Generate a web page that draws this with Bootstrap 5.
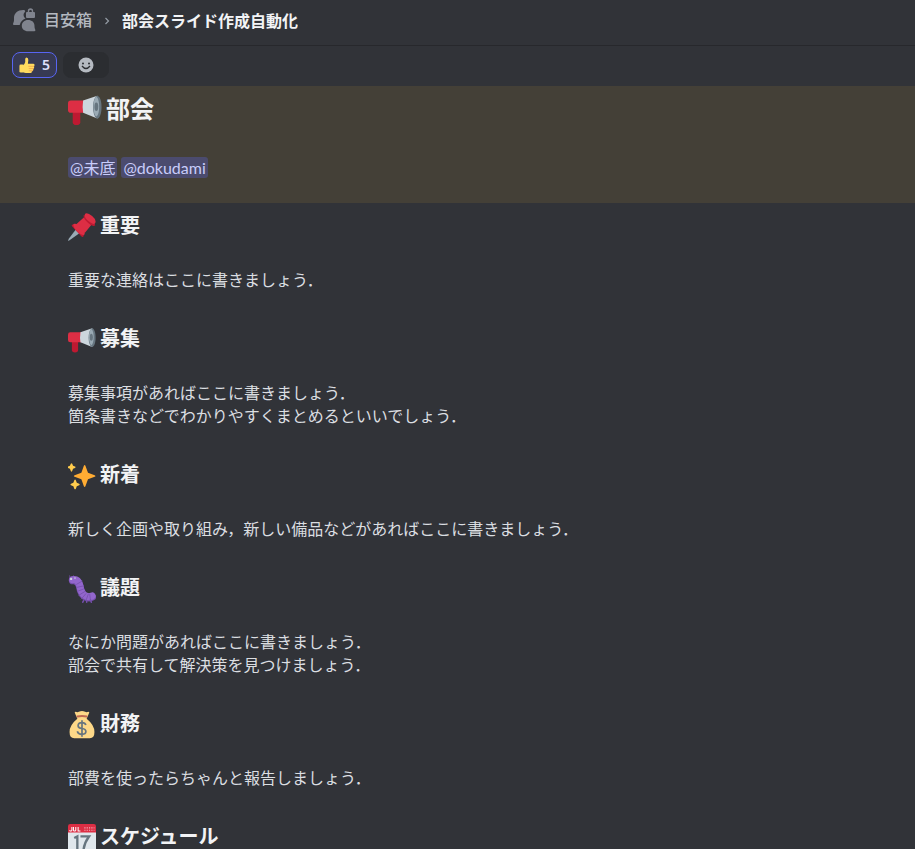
<!DOCTYPE html>
<html lang="ja">
<head>
<meta charset="utf-8">
<meta name="viewport" content="width=device-width, initial-scale=1">
<title>部会スライド作成自動化</title>
<link href="https://cdn.jsdelivr.net/npm/bootstrap@5.3.0/dist/css/bootstrap.min.css" rel="stylesheet">
<style>
body{background:#313338;color:#dbdee1;font:400 16px/23px "Noto Sans","Noto Sans CJK JP",sans-serif}
svg{display:block;flex:none}
.topbar{height:46px;padding:0 12px 6px;border-bottom:1px solid #27282c;font-family:"Noto Sans CJK JP",sans-serif}
.topbar a{color:#b5bac1;font-weight:500}
.topbar h1{font-size:16px;line-height:24px;font-weight:700;color:#f2f3f5}
.topbar .crumb-sep{margin:3px 12px 0}
.reactions{height:40px;padding:6px 12px 8px;gap:6px}
.reaction{height:26px;width:45px;border-radius:8px;border:1px solid #5865f2;background:#373a53;color:#dee0fc;font-weight:600;font-size:14px;line-height:20px;padding:0 6px}
.reaction-add{width:46px;border-color:#2b2d31;background:#2b2d31}
.message{padding:0 48px 0 68px}
.message svg{margin:2px 0 -2px}
.mentioned{background:#444037;padding-top:5px;padding-bottom:25px}
.mentioned h2{font-size:24px;line-height:34px;font-weight:700;color:#f2f3f5;gap:4px;margin-bottom:31px}
.mention{background:#4b4b6e;color:#c9cdfb;border-radius:3px;padding:0 2px;line-height:21px;font-family:Lato,"Noto Sans CJK JP",sans-serif}
.mention-list{gap:4px;height:22px}
.sections{padding-top:8px}
.sections h3{font-size:20px;line-height:28px;font-weight:700;color:#f2f3f5;gap:4px;margin-bottom:29px}
.sections p{margin-bottom:33px;font-family:"Noto Sans CJK JP",sans-serif}
h1,h2,h3{font-family:"Noto Sans CJK JP",sans-serif}
</style>
<script src="https://cdn.jsdelivr.net/npm/bootstrap@5.3.0/dist/js/bootstrap.bundle.min.js"></script>
</head>
<body>
<svg width="0" height="0" class="position-absolute" aria-hidden="true">
<symbol id="megaphone" viewBox="0 -3 36 36">
<path fill="#be1931" d="M5 16h8v12q0 3-4 3t-4-3z"/>
<path fill="#dd2e44" d="M3 5h15v13H3Q0 18 0 15V8Q0 5 3 5z"/>
<path fill="#ccd6dd" d="M16 5 31 0q3 5 3 12.500T31 24L16 18q-1-6 0-13z"/>
<path fill="#66757f" d="M31 0c6 1 6 23 0 24-6-2-6-22 0-24z"/>
<path fill="#9aaab4" d="M30 1c4 2 4 19 0 21-4-2-4-19 0-21z"/>
<ellipse cx="30" cy="11.500" rx="2" ry="4.500" fill="#66757f"/>
</symbol>
</svg>
<div class="vh-100 overflow-hidden">
<header class="topbar d-flex align-items-center">
<svg width="24" height="24" viewBox="0 0 24 24" fill="#80848e" aria-hidden="true">
<path d="M12.500 2C6 1.500 2 5 2 10c0 2 .3 3-.8 5.200-.5 1 .1 1.800 1 1.800h5.500q.7-3 2.300-4.300 1.200-1.200 3.500-2.200Q11.500 9 11.500 7q0-2 1.700-3.500z"/>
<path d="M15 4h.8V3a2.700 2.700 0 0 1 5.400 0v1h.8q1 0 1 1v4q0 1-1 1h-7q-1 0-1-1V5q0-1 1-1zm2.200 0h2.600V3.100q0-1.200-1.300-1.200t-1.300 1.200z" fill-rule="evenodd"/>
<path d="M16 12c4 0 6.500 2.400 6.500 5.700 0 1.700.2 2.600.6 3.600.6 1.300.2 2-.7 2H16c-3.700 0-6.200-2.300-6.200-5.500S12.300 12 16 12z"/>
</svg>
<a href="#" class="text-decoration-none ms-2">目安箱</a>
<svg class="crumb-sep" width="6" height="10" viewBox="0 0 6 10" fill="none" stroke="#949ba4" stroke-width="1.200" aria-hidden="true"><path d="m1.500 2 3 3-3 3"/></svg>
<h1 class="mb-0 text-truncate">部会スライド作成自動化</h1>
</header>
<div class="reactions d-flex">
<button type="button" class="reaction d-flex align-items-center justify-content-between">
<svg width="16" height="16" viewBox="0 0 36 36" aria-label="👍" role="img"><path fill="#ffdb5e" d="M8 20q5-4 6-9V5q0-4 3-4 4 0 4 6l-1 8h12q3 0 3 3t-2 3q2 1 1 3t-2 3q1 1 0 3t-3 2q1 4-3 4H15Q9 36 8 32z"/><path fill="#ffdb5e" d="M4 17h4q3 0 3 3v12q0 3-3 3H4q-3 0-3-3V20q0-3 3-3z"/><path d="M21 21h13M22 26h11M22 31h9" stroke="#ee9547" stroke-width="1.500"/></svg>
<span>5</span></button>
<button type="button" class="reaction reaction-add d-flex align-items-center justify-content-center" aria-label="リアクションを付ける">
<svg width="16" height="16" viewBox="0 0 16 16"><circle cx="8" cy="8" r="7.500" fill="#b5bac1"/><circle cx="5" cy="6.500" r="1" fill="#2b2d31"/><circle cx="11" cy="6.500" r="1" fill="#2b2d31"/><path d="M4 9q4 5 8 0" fill="none" stroke="#2b2d31" stroke-width="1.300"/></svg>
</button>
</div>
<main>
<section class="message mentioned">
<h2 class="d-flex align-items-center"><svg width="34" height="34" aria-hidden="true"><use href="#megaphone"/></svg>部会</h2>
<div class="mention-list d-flex align-items-center"><a href="#" class="mention text-decoration-none">@未底</a><a href="#" class="mention text-decoration-none">@dokudami</a></div>
</section>
<div class="message sections">
<section>
<h3 class="d-flex align-items-center"><svg width="28" height="28" viewBox="0 0 36 36" aria-hidden="true"><path fill="#99aab5" d="m11 20 5 5L2 35l-2 1 1-3z"/><path fill="#be1931" d="M5 15q7-2 11 3 6 5 4 12-1 2-3 0L6 18q-2-2-1-3z"/><path fill="#dd2e44" d="M11 14 21 5q7 1 10 9l-9 11q-8-1-11-11z"/><path fill="#be1931" d="M20 3q7 0 11 5 4 4 4 8-4 2-9-3-6-5-6-10z"/><path fill="#dd2e44" d="M22 1q3-2 9 3t4 9q-2 3-8-2-7-5-5-10zM7 14q6-1 12 5 4 4 2 9-3 1-9-4-6-6-5-10z"/></svg>重要</h3>
<p>重要な連絡はここに書きましょう．</p>
</section>
<section>
<h3 class="d-flex align-items-center"><svg width="28" height="28" aria-hidden="true"><use href="#megaphone"/></svg>募集</h3>
<p>募集事項があればここに書きましょう．<br>箇条書きなどでわかりやすくまとめるといいでしょう．</p>
</section>
<section>
<h3 class="d-flex align-items-center"><svg width="28" height="28" viewBox="0 0 36 36" fill="#ffac33" aria-hidden="true"><path d="m34.300 16.900-8.600-3.200-3.300-8.900q-1-2-2 0l-3.200 8.900-8.700 3.200q-2 1 0 2l8.700 3.300 3.200 9q1 2 2 0l3.300-9 8.600-3.300q2-1 0-2z"/><path fill="#ffcc4d" d="m14.300 27.900-3-1.200-1.200-3.300q-1-1.500-2 0l-1.200 3.300-3 1.200q-1.500 1 0 2l3 1.200 1.200 3.200q1 1.500 2 0l1.200-3.200 3-1.200q1.500-1 0-2zM9 5.900 6.500 4.800 5.400 2.200q-.9-1.500-1.800 0L2.500 4.800 0 5.900q-1.500.8 0 1.700l2.500 1.100 1.100 3q.9 1.500 1.800 0l1.100-3L9 7.600q1.500-.9 0-1.700z"/></svg>新着</h3>
<p>新しく企画や取り組み，新しい備品などがあればここに書きましょう．</p>
</section>
<section>
<h3 class="d-flex align-items-center"><svg width="28" height="28" viewBox="0 0 36 36" fill="none" stroke-linecap="round" aria-hidden="true"><path d="M3 4 2 1m4 3 1-3" stroke="#744eaa"/><path d="M6 7q7-1 9 7 2 12 8 14 4 2 8 0" stroke="#744eaa" stroke-width="10"/><path d="M6 6q7-1 9 7 2 12 8 14 4 2 8 0" stroke="#9266cc" stroke-width="9"/><path d="m11 12 7-4m-7 8 9-2m-8 7 8-3m-6 8 8-5m-5 10 6-7m0 9 3-8m3 8-1-8" stroke="#744eaa"/><circle cx="4" cy="5" r="1.500" fill="#ccd6dd"/><circle cx="9" cy="4" r="1" fill="#ccd6dd"/><path d="m20 33-1 2m5-2v2m5-3 1 3" stroke="#744eaa" stroke-width="2"/></svg>議題</h3>
<p>なにか問題があればここに書きましょう．<br>部会で共有して解決策を見つけましょう．</p>
</section>
<section>
<h3 class="d-flex align-items-center"><svg width="28" height="28" viewBox="0 0 36 36" fill="none" aria-hidden="true"><path fill="#fdd888" d="M10 1q2 1 4 0 4-2 8 0 2 1 4 0 2 0 1 2l-3 7q10 8 10 17 0 8-6 8H8q-6 0-6-8 0-9 10-17L9 3q-1-2 1-2z"/><path d="M12 7q6-1 12 0" stroke="#bf6952" stroke-width="2.500" stroke-linecap="round"/><path d="M23 18q-1-3-5-3-5 0-5 4 0 3 5 3.500 5 .5 5 4T18 30q-5 0-6-4M18 12v21" stroke="#67757f" stroke-width="2.200"/></svg>財務</h3>
<p>部費を使ったらちゃんと報告しましょう．</p>
</section>
<section>
<h3 class="d-flex align-items-center"><svg width="28" height="28" viewBox="0 0 36 36" fill="none" aria-hidden="true"><path fill="#e0e7ec" d="M0 9h36v24q0 3-3 3H3q-3 0-3-3z"/><path fill="#dd2e44" d="M0 11V3q0-3 3-3h30q3 0 3 3v8z"/><path d="M5 4v4q0 1-1.500 1T2 8m5-4v4q0 1 1.500 1T10 8V4m3 0v5h3" stroke="#fff" stroke-width="1.300"/><path d="M21 5h13M21 8h13" stroke="#f5b1ba" stroke-width="1.500" stroke-dasharray="1.500 1.500"/><path d="m8 18 4-2v17M16 16h11q-6 8-7 17" stroke="#66757f" stroke-width="3"/></svg>スケジュール</h3>
</section>
</div>
</main>
</div>
</body>
</html>
